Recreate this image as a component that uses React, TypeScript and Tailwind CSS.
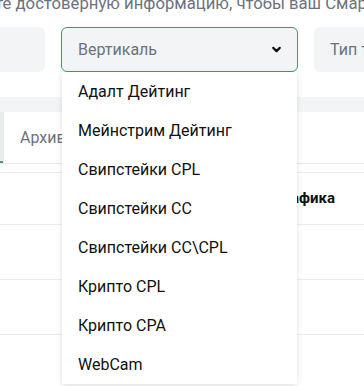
import { FiChevronDown } from 'react-icons/fi';

const options = [
  'Адалт Дейтинг',
  'Мейнстрим Дейтинг',
  'Свипстейки CPL',
  'Свипстейки CC',
  'Свипстейки CC\\CPL',
  'Крипто CPL',
  'Крипто CPA',
  'WebCam',
];

const App = () => {
  return (
    <div
      className="relative w-[364px] h-[386px] overflow-hidden bg-white"
      style={{ fontFamily: 'Roboto, "Liberation Sans", sans-serif' }}
    >
      <p className="-mt-[8px] -ml-[55px] whitespace-nowrap text-[16.7px] leading-[24px] text-[#6b7280]">
        Укажите достоверную информацию, чтобы ваш Смартлинк работал корректно
      </p>

      {/* filters row */}
      <div className="mt-[11px] flex gap-[16px] -ml-[120px] h-[45px]">
        <div className="w-[165px] shrink-0 rounded-[6px] bg-[#f3f4f6]"></div>
        <div className="w-[237px] shrink-0 flex items-center justify-between rounded-[6px] border border-[#3f9a66] bg-[#f3f4f6] pl-[16px] pr-[14px]">
          <span className="text-[16px] text-[#6b7280]">Вертикаль</span>
          <FiChevronDown className="text-[#111] text-[13px]" strokeWidth={4} />
        </div>
        <div className="w-[200px] shrink-0 flex items-center rounded-[6px] bg-[#f3f4f6] px-[16px]">
          <span className="text-[16px] text-[#6b7280] whitespace-nowrap">Тип трафика</span>
        </div>
      </div>

      <div className="mt-[25px] h-[15px] bg-[#f3f4f6]"></div>

      {/* tabs */}
      <div className="flex h-[52px] border-b border-[#e5e7eb]">
        <div className="w-[3px] shrink-0 bg-[#e8efea] border-b-2 border-[#4c9a6e]"></div>
        <div className="flex items-center border-l border-[#e5e7eb] pl-[16px]">
          <span className="text-[16px] text-[#6b7280] whitespace-nowrap">Архив</span>
        </div>
      </div>

      {/* table */}
      <div className="mt-[8px] border-t border-[#ebebeb]">
        <div className="flex h-[52px] items-center justify-end border-b border-[#ebebeb] pr-[29px]">
          <span className="text-[15px] font-bold text-[#111] whitespace-nowrap">Тип трафика</span>
        </div>
        <div className="h-[55px] border-b border-[#ebebeb]"></div>
        <div className="h-[55px] border-b border-[#ebebeb]"></div>
        <div className="h-[55px] border-b border-[#ebebeb]"></div>
      </div>

      {/* dropdown */}
      <div className="absolute left-[62px] top-[72px] w-[235px] bg-white shadow-[0_2px_6px_rgba(0,0,0,0.12)]">
        {options.map((o) => (
          <div key={o} className="flex h-[39px] items-center px-[16px] text-[16px] text-[#111]">
            {o}
          </div>
        ))}
      </div>
    </div>
  );
};

export default App;
